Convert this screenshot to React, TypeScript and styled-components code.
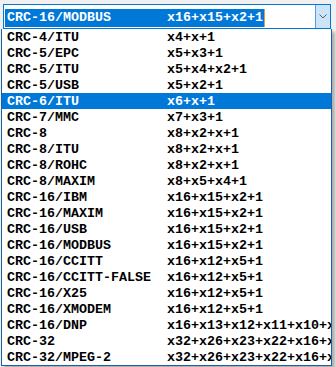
import React from 'react';
import styled, { createGlobalStyle } from 'styled-components';

const GlobalStyle = createGlobalStyle`
  html, body {
    margin: 0;
    padding: 0;
    background: #f0f0f0;
  }
`;

const Page = styled.div`
  width: 336px;
  height: 367px;
  padding: 4px 0 0 1px;
  box-sizing: border-box;
  overflow: hidden;
  font-family: 'Liberation Mono', 'Courier New', monospace;
  font-weight: bold;
  font-size: 13.33px;
`;

const Combo = styled.div`
  display: flex;
  margin-left: 2px;
  width: 328px;
  height: 25px;
  box-sizing: border-box;
  border: 1px solid #0078d7;
  background: #fff;
`;

const Field = styled.div`
  flex: 1;
  display: flex;
  align-items: center;
  padding: 2px 0 0 1px;
`;

const Selected = styled.span`
  display: flex;
  height: 18px;
  align-items: center;
  padding: 0 1px 0 2px;
  background: #0078d7;
  color: #fff;
  white-space: pre;
  border-right: 1px solid #d89a5a;
`;

const DropButton = styled.div`
  width: 14px;
  display: flex;
  align-items: center;
  justify-content: center;
  background: #cce4f7;
  border-left: 1px solid #569de5;
`;

const List = styled.ul`
  margin: 0;
  padding: 0;
  list-style: none;
  width: 331px;
  box-sizing: border-box;
  background: #fff;
  border: 1px solid #1c5fa6;
  border-top: none;
  box-shadow: 3px 3px 3px rgba(0, 0, 0, 0.28);
`;

const Row = styled.li<{ $active?: boolean }>`
  display: grid;
  grid-template-columns: 160px 1fr;
  height: 16px;
  align-items: center;
  padding-left: 5px;
  white-space: pre;
  overflow: hidden;
  background: ${(p) => (p.$active ? '#0078d7' : 'transparent')};
  color: ${(p) => (p.$active ? '#fff' : '#000')};
`;

const Name = styled.span``;

const Poly = styled.span`
  overflow: hidden;
`;

const items: [string, string][] = [
  ['CRC-4/ITU', 'x4+x+1'],
  ['CRC-5/EPC', 'x5+x3+1'],
  ['CRC-5/ITU', 'x5+x4+x2+1'],
  ['CRC-5/USB', 'x5+x2+1'],
  ['CRC-6/ITU', 'x6+x+1'],
  ['CRC-7/MMC', 'x7+x3+1'],
  ['CRC-8', 'x8+x2+x+1'],
  ['CRC-8/ITU', 'x8+x2+x+1'],
  ['CRC-8/ROHC', 'x8+x2+x+1'],
  ['CRC-8/MAXIM', 'x8+x5+x4+1'],
  ['CRC-16/IBM', 'x16+x15+x2+1'],
  ['CRC-16/MAXIM', 'x16+x15+x2+1'],
  ['CRC-16/USB', 'x16+x15+x2+1'],
  ['CRC-16/MODBUS', 'x16+x15+x2+1'],
  ['CRC-16/CCITT', 'x16+x12+x5+1'],
  ['CRC-16/CCITT-FALSE', 'x16+x12+x5+1'],
  ['CRC-16/X25', 'x16+x12+x5+1'],
  ['CRC-16/XMODEM', 'x16+x12+x5+1'],
  ['CRC-16/DNP', 'x16+x13+x12+x11+x10+x8+x6+x5+x2+1'],
  ['CRC-32', 'x32+x26+x23+x22+x16+x12+x11+x10+x8+x7+x5+x4+x2+x+1'],
  ['CRC-32/MPEG-2', 'x32+x26+x23+x22+x16+x12+x11+x10+x8+x7+x5+x4+x2+x+1'],
];

export default function App() {
  return (
    <Page>
      <GlobalStyle />
      <Combo>
        <Field>
          <Selected>{'CRC-16/MODBUS'.padEnd(20, ' ') + 'x16+x15+x2+1'}</Selected>
        </Field>
        <DropButton>
          <svg width="8" height="5" viewBox="0 0 8 5">
            <path d="M0.5 0.5 L4 4 L7.5 0.5" fill="none" stroke="#606060" strokeWidth="1" />
          </svg>
        </DropButton>
      </Combo>
      <List>
        {items.map(([name, poly], i) => (
          <Row key={name} $active={i === 4}>
            <Name>{name}</Name>
            <Poly>{poly}</Poly>
          </Row>
        ))}
      </List>
    </Page>
  );
}
